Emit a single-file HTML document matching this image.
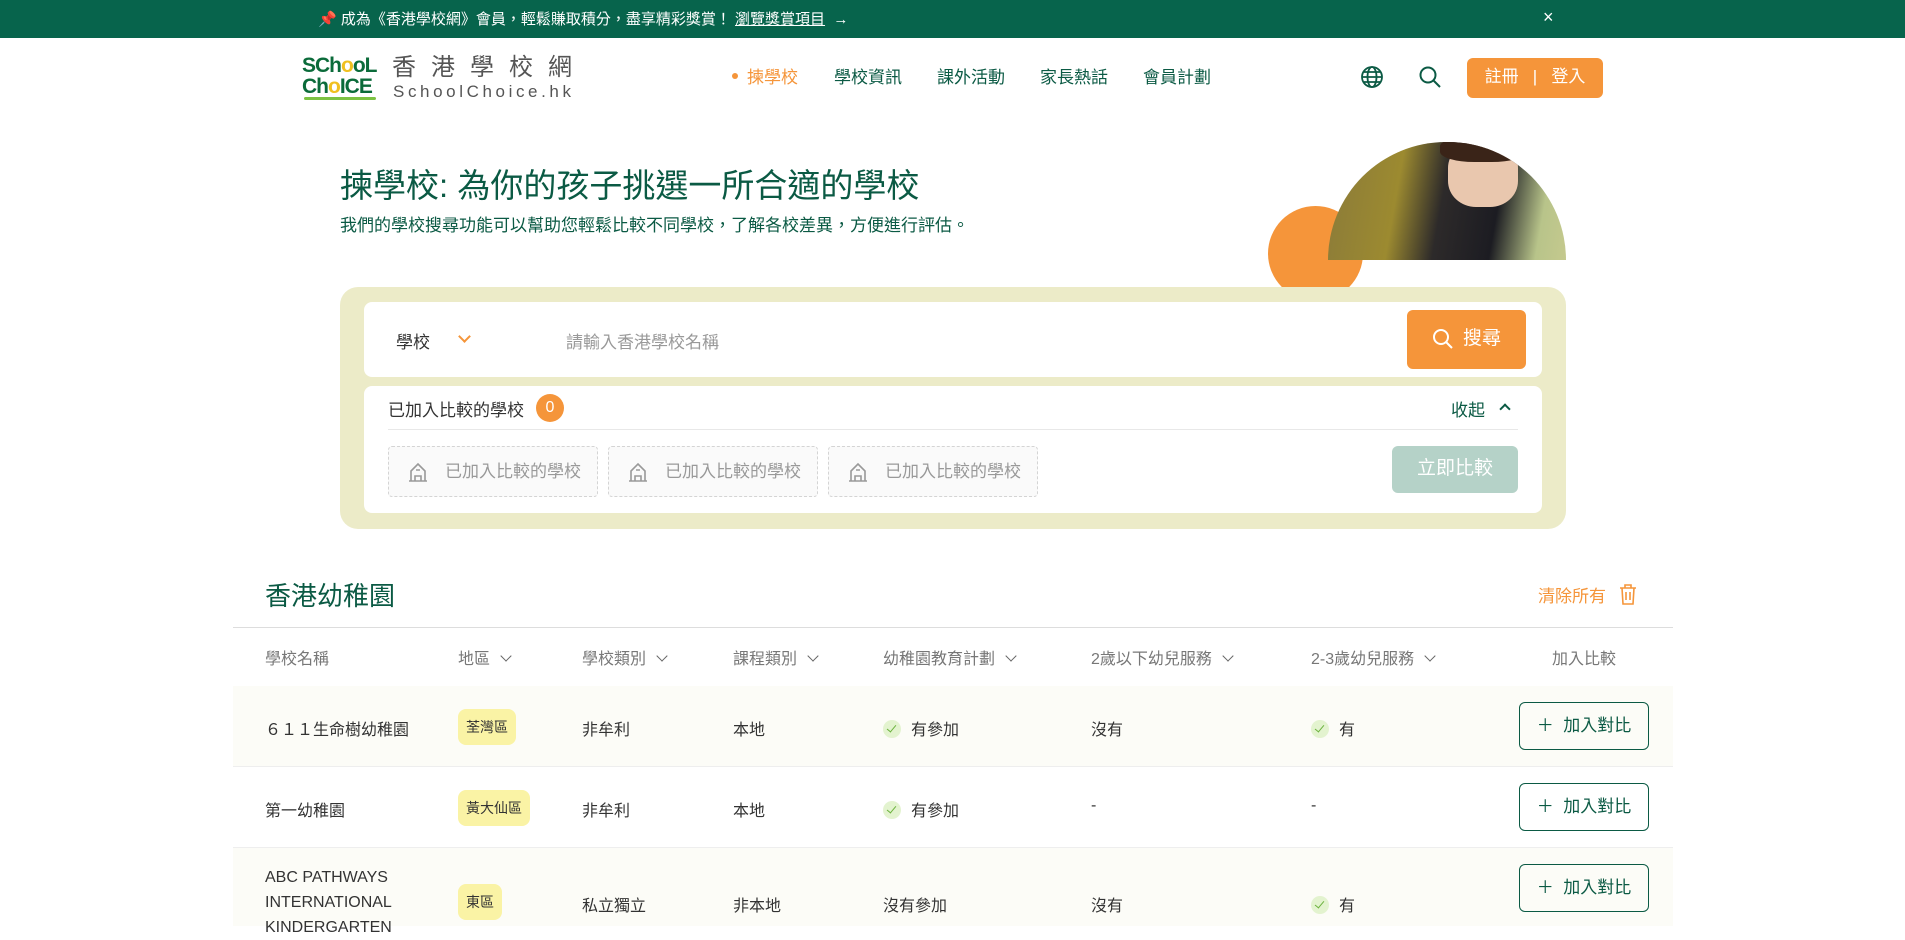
<!DOCTYPE html>
<html><head><meta charset="utf-8">
<style>
*{box-sizing:border-box;margin:0;padding:0}
body{width:1905px;height:926px;overflow:hidden;background:#fff;font-family:"Liberation Sans","Noto Sans CJK TC",sans-serif;color:#333;position:relative}
.abs{position:absolute}
.top{left:0;top:0;width:1905px;height:38px;background:#07644c;color:#fff;font-size:15px}
.nav a{position:absolute;top:63px;font-size:17px;color:#0b5a44}
.green{color:#0b5a44}
.th{position:absolute;top:645px;font-size:16px;color:#777}
.td{position:absolute;font-size:16px;color:#333}
.chev{display:inline-block;width:8px;height:8px;border-right:1.6px solid #666;border-bottom:1.6px solid #666;transform:rotate(45deg);margin-left:12px;position:relative;top:-4px}
.tag{position:absolute;background:#faf3a5;border-radius:8px;font-size:14px;color:#333;padding:0 8px;height:36px;line-height:36px}
.btn{position:absolute;left:1519px;width:130px;height:48px;border:1.5px solid #0b5a44;border-radius:6px;color:#0b5a44;font-size:17px;line-height:45px;text-align:center}
.chk{display:inline-block;width:18px;height:18px;border-radius:50%;background:#e3f3cf;vertical-align:-3px;margin-right:10px;position:relative}
.chk:after{content:"";position:absolute;left:6px;top:3px;width:4px;height:8px;border-right:1.6px solid #6cb33e;border-bottom:1.6px solid #6cb33e;transform:rotate(40deg)}
.ph{position:absolute;top:446px;width:210px;height:51px;border:1px dashed #d4d4d4;border-radius:4px;background:#fafafa;color:#999;font-size:17px;line-height:49px;padding-left:56px}
.ph svg{position:absolute;left:18px;top:14px}
</style></head><body>
<div class="abs top">
 <div class="abs" style="left:318px;top:8px">📌 成為《香港學校網》會員，輕鬆賺取積分，盡享精彩獎賞！ <u>瀏覽獎賞項目</u> &nbsp;→</div>
 <div class="abs" style="left:1543px;top:7px;font-size:18px">×</div>
</div>
<!-- logo -->
<div class="abs" style="left:302px;top:55px;width:78px;height:46px;font-weight:bold;color:#0b6b3a;font-size:21px;line-height:21px;letter-spacing:-1px">SCh<span style="color:#f0c020">o</span>oL<br>Ch<span style="color:#f0c020">o</span>ICE</div>
<div class="abs" style="left:304px;top:97px;width:72px;height:3px;background:#7cc242;border-radius:2px"></div>
<div class="abs" style="left:392px;top:54px;font-size:24px;letter-spacing:15px;color:#555;line-height:28px">香港學校網</div>
<div class="abs" style="left:393px;top:82px;font-size:17px;letter-spacing:3.6px;color:#555;line-height:20px">SchoolChoice.hk</div>
<div class="nav">
 <div class="abs" style="left:732px;top:73px;width:6px;height:6px;border-radius:50%;background:#f5953a"></div>
 <a style="left:747px;color:#f5953a">揀學校</a>
 <a style="left:834px">學校資訊</a>
 <a style="left:937px">課外活動</a>
 <a style="left:1040px">家長熱話</a>
 <a style="left:1143px">會員計劃</a>
</div>
<svg class="abs" style="left:1360px;top:65px" width="24" height="24" viewBox="0 0 24 24" fill="none" stroke="#0b5a44" stroke-width="1.8"><circle cx="12" cy="12" r="10"/><ellipse cx="12" cy="12" rx="4.5" ry="10"/><path d="M2 12h20M4 7h16M4 17h16"/></svg>
<svg class="abs" style="left:1418px;top:65px" width="24" height="24" viewBox="0 0 24 24" fill="none" stroke="#0b5a44" stroke-width="2"><circle cx="10" cy="10" r="7.5"/><path d="M15.5 15.5L22 22"/></svg>
<div class="abs" style="left:1467px;top:58px;width:136px;height:40px;background:#f5953a;border-radius:6px;color:#fff;font-size:17px;line-height:38px;text-align:center">註冊 &nbsp;&nbsp;|&nbsp;&nbsp; 登入</div>

<div class="abs green" style="left:340px;top:159px;font-size:33px">揀學校: 為你的孩子挑選一所合適的學校</div>
<div class="abs green" style="left:340px;top:211px;font-size:17px">我們的學校搜尋功能可以幫助您輕鬆比較不同學校，了解各校差異，方便進行評估。</div>
<div class="abs" style="left:1268px;top:206px;width:95px;height:95px;border-radius:50%;background:#f5953a"></div>
<div class="abs" style="left:1328px;top:142px;width:238px;height:118px;border-radius:119px 119px 0 0;overflow:hidden;background:linear-gradient(100deg,#8a7a3a 0%,#9c8a30 30%,#2d2a2a 48%,#1c1c22 70%,#b8c48a 88%,#c5c98e 100%)">
 <div class="abs" style="left:120px;top:0;width:70px;height:65px;border-radius:40%;background:#e9c7ae"></div>
 <div class="abs" style="left:112px;top:-6px;width:86px;height:26px;border-radius:40%;background:#3a2418"></div>
</div>

<div class="abs" style="left:340px;top:287px;width:1226px;height:242px;background:#ecebc8;border-radius:18px"></div>
<div class="abs" style="left:364px;top:302px;width:1178px;height:75px;background:#fff;border-radius:8px"></div>
<div class="abs" style="left:396px;top:328px;font-size:17px;color:#333">學校</div>
<div class="abs" style="left:460px;top:332px;width:9px;height:9px;border-right:2px solid #f5953a;border-bottom:2px solid #f5953a;transform:rotate(45deg)"></div>
<div class="abs" style="left:566px;top:328px;font-size:17px;color:#999">請輸入香港學校名稱</div>
<div class="abs" style="left:1407px;top:310px;width:119px;height:59px;background:#f5953a;border-radius:6px;color:#fff;font-size:19px;line-height:57px;padding-left:56px">搜尋</div>
<svg class="abs" style="left:1432px;top:328px" width="22" height="22" viewBox="0 0 22 22" fill="none" stroke="#fff" stroke-width="2"><circle cx="9" cy="9" r="7"/><path d="M14 14l6 6"/></svg>
<div class="abs" style="left:364px;top:386px;width:1178px;height:127px;background:#fff;border-radius:8px"></div>
<div class="abs" style="left:388px;top:396px;font-size:17px;color:#333">已加入比較的學校</div>
<div class="abs" style="left:536px;top:394px;width:28px;height:28px;border-radius:50%;background:#f5953a;color:#fff;font-size:16px;line-height:28px;text-align:center">0</div>
<div class="abs green" style="left:1451px;top:396px;font-size:17px">收起</div>
<div class="abs" style="left:1501px;top:405px;width:8px;height:8px;border-left:2px solid #0b5a44;border-top:2px solid #0b5a44;transform:rotate(45deg)"></div>
<div class="abs" style="left:388px;top:429px;width:1130px;height:1px;background:#e8e8e8"></div>
<div class="ph" style="left:388px"><svg width="22" height="22" viewBox="0 0 22 22" fill="none" stroke="#999" stroke-width="1.6"><path d="M2 20h18M4 20V10l7-7 7 7v10M8 20v-5h6v5M9 9h4"/></svg>已加入比較的學校</div>
<div class="ph" style="left:608px"><svg width="22" height="22" viewBox="0 0 22 22" fill="none" stroke="#999" stroke-width="1.6"><path d="M2 20h18M4 20V10l7-7 7 7v10M8 20v-5h6v5M9 9h4"/></svg>已加入比較的學校</div>
<div class="ph" style="left:828px"><svg width="22" height="22" viewBox="0 0 22 22" fill="none" stroke="#999" stroke-width="1.6"><path d="M2 20h18M4 20V10l7-7 7 7v10M8 20v-5h6v5M9 9h4"/></svg>已加入比較的學校</div>
<div class="abs" style="left:1392px;top:446px;width:126px;height:47px;background:#b5d2c8;border-radius:6px;color:#fff;font-size:19px;line-height:45px;text-align:center">立即比較</div>

<div class="abs green" style="left:265px;top:576px;font-size:26px">香港幼稚園</div>
<div class="abs" style="left:1538px;top:582px;font-size:17px;color:#f5953a">清除所有</div>
<svg class="abs" style="left:1619px;top:583px" width="18" height="22" viewBox="0 0 18 22" fill="none" stroke="#f5953a" stroke-width="1.6"><path d="M1 5h16M6 5V2h6v3M3 5l1 16h10l1-16M7 9v8M11 9v8"/></svg>
<div class="abs" style="left:233px;top:627px;width:1440px;height:1px;background:#ddd"></div>
<div class="th" style="left:265px">學校名稱</div>
<div class="th" style="left:458px">地區<span class="chev"></span></div>
<div class="th" style="left:582px">學校類別<span class="chev"></span></div>
<div class="th" style="left:733px">課程類別<span class="chev"></span></div>
<div class="th" style="left:883px">幼稚園教育計劃<span class="chev"></span></div>
<div class="th" style="left:1091px">2歲以下幼兒服務<span class="chev"></span></div>
<div class="th" style="left:1311px">2-3歲幼兒服務<span class="chev"></span></div>
<div class="th" style="left:1552px">加入比較</div>

<div class="abs" style="left:233px;top:686px;width:1440px;height:81px;background:#fcfcf7;border-bottom:1px solid #eee"></div>
<div class="td" style="left:265px;top:716px">６１１生命樹幼稚園</div>
<div class="tag" style="left:458px;top:709px">荃灣區</div>
<div class="td" style="left:582px;top:716px">非牟利</div>
<div class="td" style="left:733px;top:716px">本地</div>
<div class="td" style="left:883px;top:716px"><span class="chk"></span>有參加</div>
<div class="td" style="left:1091px;top:716px">沒有</div>
<div class="td" style="left:1311px;top:716px"><span class="chk"></span>有</div>
<div class="btn" style="top:702px">＋ &nbsp;加入對比</div>

<div class="abs" style="left:233px;top:767px;width:1440px;height:81px;border-bottom:1px solid #eee"></div>
<div class="td" style="left:265px;top:797px">第一幼稚園</div>
<div class="tag" style="left:458px;top:790px">黃大仙區</div>
<div class="td" style="left:582px;top:797px">非牟利</div>
<div class="td" style="left:733px;top:797px">本地</div>
<div class="td" style="left:883px;top:797px"><span class="chk"></span>有參加</div>
<div class="td" style="left:1091px;top:797px">-</div>
<div class="td" style="left:1311px;top:797px">-</div>
<div class="btn" style="top:783px">＋ &nbsp;加入對比</div>

<div class="abs" style="left:233px;top:848px;width:1440px;height:78px;background:#fcfcf7"></div>
<div class="td" style="left:265px;top:865px;line-height:25px">ABC PATHWAYS<br>INTERNATIONAL<br>KINDERGARTEN</div>
<div class="tag" style="left:458px;top:884px">東區</div>
<div class="td" style="left:582px;top:892px">私立獨立</div>
<div class="td" style="left:733px;top:892px">非本地</div>
<div class="td" style="left:883px;top:892px">沒有參加</div>
<div class="td" style="left:1091px;top:892px">沒有</div>
<div class="td" style="left:1311px;top:892px"><span class="chk"></span>有</div>
<div class="btn" style="top:864px">＋ &nbsp;加入對比</div>
</body></html>
